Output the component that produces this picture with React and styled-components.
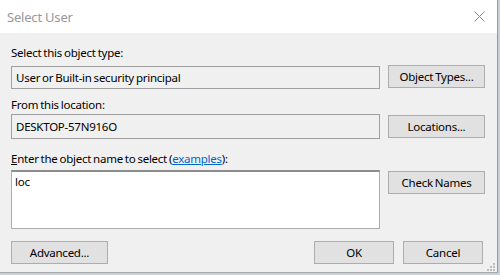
import React from "react";
import styled, { createGlobalStyle } from "styled-components";

const Global = createGlobalStyle`
  html, body { margin: 0; padding: 0; }
  body {
    width: 500px;
    height: 275px;
    overflow: hidden;
    background: #c9d0d8;
    font-family: "Noto Sans", "Open Sans", sans-serif;
  }
`;

const Window = styled.div`
  width: 498px;
  height: 273px;
  display: flex;
  flex-direction: column;
  background: #f0f0f0;
  box-sizing: border-box;
  border-right: 1px solid #9a9a9a;
  border-bottom: 1px solid #a9a9a9;
`;

const TitleBar = styled.div`
  height: 33px;
  flex: none;
  display: flex;
  align-items: center;
  justify-content: space-between;
  background: #ffffff;
  padding: 0 12px 0 7px;
`;

const Title = styled.div`
  font-size: 13px;
  letter-spacing: -0.2px;
  color: #999999;
`;

const Close = styled.svg`
  width: 11px;
  height: 11px;
  display: block;
`;

const Body = styled.div`
  flex: 1;
  display: flex;
  flex-direction: column;
  padding: 12px 14px 0 11px;
  font-size: 11.5px;
  letter-spacing: -0.25px;
  word-spacing: -0.8px;
  color: #000;
  position: relative;
`;

const Label = styled.div`
  height: 15px;
  line-height: 15px;
  margin-top: ${(p) => p.$mt || 0}px;
`;

const Row = styled.div`
  display: grid;
  grid-template-columns: 369px 97px;
  column-gap: 8px;
  align-items: start;
  margin-top: ${(p) => p.$mt || 0}px;
`;

const Field = styled.div`
  box-sizing: border-box;
  height: ${(p) => p.$h}px;
  margin-top: ${(p) => p.$offset || 0}px;
  border: 1px solid ${(p) => (p.$white ? "#adadad" : "#a0a0a0")};
  border-top: ${(p) => (p.$white ? "2px solid #8c8c8c" : "1px solid #a0a0a0")};
  background: ${(p) => (p.$white ? "#ffffff" : "#f0f0f0")};
  padding: ${(p) => (p.$white ? "2px 3px" : "0 4px")};
  display: flex;
  align-items: ${(p) => (p.$white ? "flex-start" : "center")};
`;

const Button = styled.button`
  box-sizing: border-box;
  height: 23px;
  width: ${(p) => p.$w || 97}px;
  border: 1px solid #adadad;
  background: #e1e1e1;
  font-family: inherit;
  font-size: 11.5px;
  letter-spacing: -0.25px;
  word-spacing: -0.8px;
  color: #000;
  padding: 0;
  margin-top: ${(p) => p.$offset || 0}px;
`;

const Link = styled.span`
  color: #0066cc;
  text-decoration: underline;
`;

const U = styled.span`
  text-decoration: underline;
`;

const Footer = styled.div`
  display: flex;
  align-items: center;
  margin-top: 12px;
`;

const Spacer = styled.div`
  flex: 1;
`;

const FooterRight = styled.div`
  display: flex;
  gap: 9px;
`;

const Grip = styled.svg`
  position: absolute;
  right: 2px;
  bottom: 1px;
  width: 9px;
  height: 9px;
`;

export default function App() {
  return (
    <>
      <Global />
      <Window>
        <TitleBar>
          <Title>Select User</Title>
          <Close viewBox="0 0 11 11">
            <path d="M0.5 0.5 L10.5 10.5 M10.5 0.5 L0.5 10.5" stroke="#8a8a8a" strokeWidth="1" fill="none" />
          </Close>
        </TitleBar>
        <Body>
          <Label>Select this object type:</Label>
          <Row $mt={5}>
            <Field $h={23} $offset={1}>User or Built-in security principal</Field>
            <Button>Object Types...</Button>
          </Row>
          <Label $mt={8}>From this location:</Label>
          <Row $mt={2}>
            <Field $h={25}>DESKTOP-57N916O</Field>
            <Button $offset={1}>Locations...</Button>
          </Row>
          <Label $mt={12}><U>E</U>nter the object name to select (<Link>examples</Link>):</Label>
          <Row $mt={4}>
            <Field $h={59} $white>loc</Field>
            <Button $offset={1}>Check Names</Button>
          </Row>
          <Footer>
            <Button $w={97}>Advanced...</Button>
            <Spacer />
            <FooterRight>
              <Button $w={80}>OK</Button>
              <Button $w={80}>Cancel</Button>
            </FooterRight>
          </Footer>
          <Grip viewBox="0 0 9 9">
            {[[7, 1], [7, 4], [4, 4], [7, 7], [4, 7], [1, 7]].map(([x, y], i) => (
              <rect key={i} x={x} y={y} width="2" height="2" fill="#bdbdbd" />
            ))}
          </Grip>
        </Body>
      </Window>
    </>
  );
}
